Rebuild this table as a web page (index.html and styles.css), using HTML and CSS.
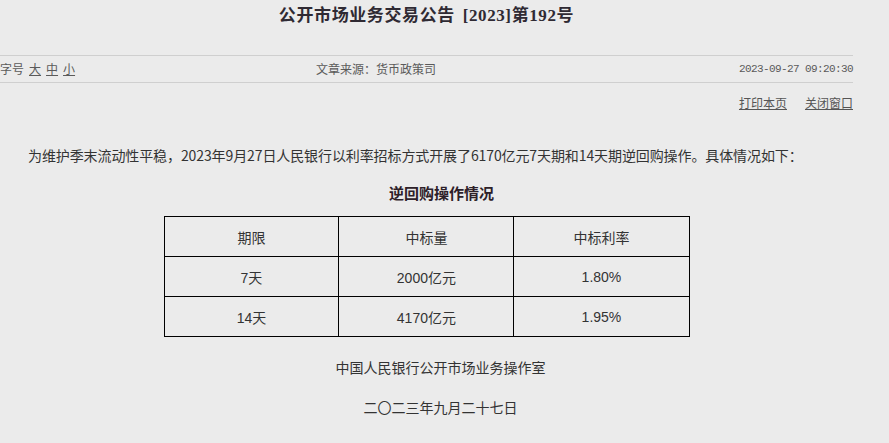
FILE: index.html
```html
<!DOCTYPE html>
<html lang="zh-CN">
<head>
<meta charset="utf-8">
<title>公开市场业务交易公告 [2023]第192号</title>
<link rel="stylesheet" href="styles.css">
</head>
<body>
<div class="page">
  <h1 class="title">公开市场业务交易公告 [2023]第192号</h1>
  <div class="meta">
    <div class="fontsize">字号<a href="#">大</a><a href="#">中</a><a href="#">小</a></div>
    <div class="source">文章来源：货币政策司</div>
    <div class="date">2023-09-27 09:20:30</div>
  </div>
  <div class="tools">
    <a href="#">打印本页</a>
    <a href="#">关闭窗口</a>
  </div>
  <div class="content">
    <p class="intro">为维护季末流动性平稳，2023年9月27日人民银行以利率招标方式开展了6170亿元7天期和14天期逆回购操作。具体情况如下：</p>
    <p class="heading">逆回购操作情况</p>
    <table class="ops">
      <tr><td>期限</td><td>中标量</td><td>中标利率</td></tr>
      <tr><td>7天</td><td>2000亿元</td><td>1.80%</td></tr>
      <tr><td>14天</td><td>4170亿元</td><td>1.95%</td></tr>
    </table>
    <p class="sign">中国人民银行公开市场业务操作室</p>
    <p class="signdate">二〇二三年九月二十七日</p>
  </div>
</div>
</body>
</html>
```

FILE: styles.css
```css
html, body {
  margin: 0;
  padding: 0;
  background: #ebebeb;
}
body {
  font-family: "Noto Sans CJK SC", "Liberation Sans", sans-serif;
  color: #333;
}
.page {
  width: 853px;
}
.title {
  margin: 0;
  height: 55px;
  line-height: 32px;
  text-align: center;
  font-family: "Liberation Serif", "Noto Sans CJK SC", serif;
  font-size: 17px;
  font-weight: bold;
  letter-spacing: 0.6px;
  word-spacing: 3px;
  color: #2f2a33;
}
.meta {
  display: grid;
  grid-template-columns: 316px auto 1fr;
  height: 26px;
  line-height: 26px;
  border-top: 1px solid #cfcfcf;
  border-bottom: 1px solid #cfcfcf;
  font-size: 12px;
  color: #5a5a5a;
}
.fontsize a {
  color: #5a5a5a;
  margin-left: 5px;
  text-decoration: underline;
}
.date {
  text-align: right;
  font-family: "Liberation Mono", monospace;
  font-size: 11px;
  letter-spacing: -0.6px;
  color: #5a5a5a;
}
.tools {
  display: flex;
  justify-content: flex-end;
  gap: 18px;
  height: 40px;
  line-height: 40px;
  font-size: 12px;
}
.tools a {
  color: #555;
  text-decoration: underline;
}
.content p {
  margin: 0;
  text-indent: 2em;
  font-size: 14px;
  line-height: 24px;
}
.content .intro {
  margin-top: 20px;
  letter-spacing: -0.1px;
}
.content .heading {
  margin-top: 14px;
  text-align: center;
  font-size: 15px;
  font-weight: bold;
  color: #2d2028;
}
.ops {
  margin: 11px auto 0;
  border-collapse: collapse;
  width: 526px;
  font-family: "Liberation Sans", "Noto Sans CJK SC", sans-serif;
  font-size: 14px;
  color: #333;
}
.ops td {
  border: 1px solid #000;
  width: 175px;
  height: 39px;
  padding: 0;
  text-align: center;
  vertical-align: middle;
}
.content .sign {
  margin-top: 18px;
  text-align: center;
}
.content .signdate {
  margin-top: 16px;
  text-align: center;
}
```
